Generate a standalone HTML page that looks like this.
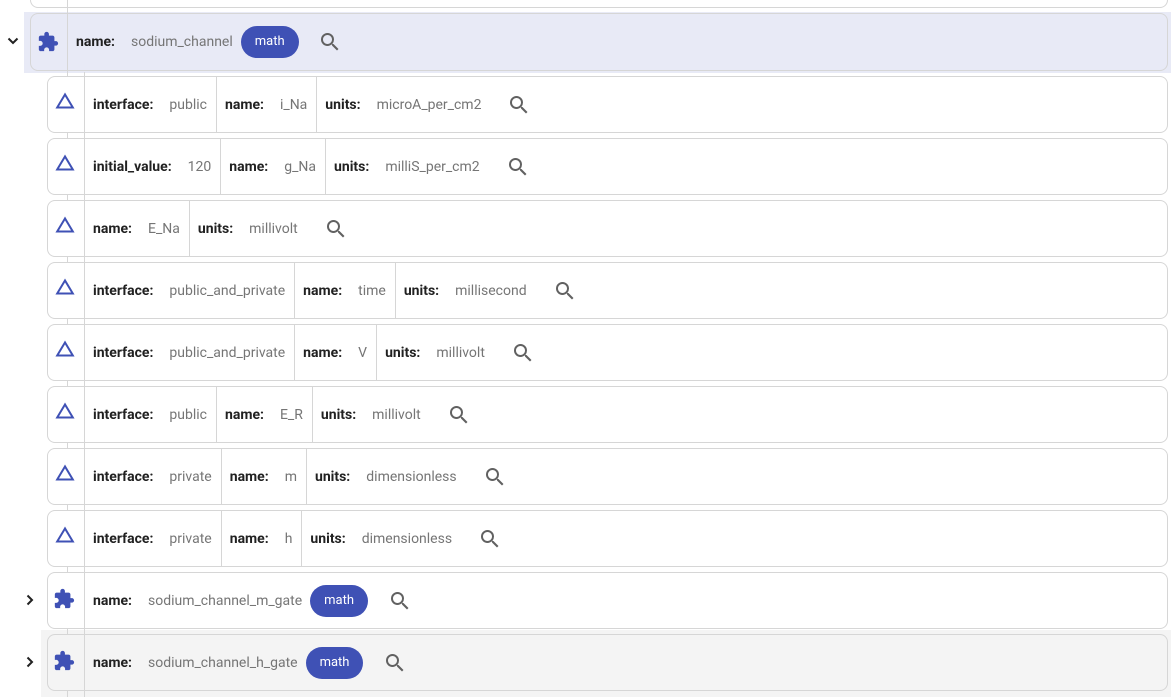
<!DOCTYPE html>
<html><head><meta charset="utf-8"><style>
body{margin:0;width:1171px;height:697px;overflow:hidden;background:#fff;font-family:Roboto,"Liberation Sans",sans-serif;font-size:14px;position:relative}
.band{position:absolute;background:#e8eaf6}
.card{position:absolute;border:1px solid #d6d6d6;border-radius:8px;box-sizing:border-box;display:flex;align-items:center;background:#fff}
.ic{width:36px;height:100%;display:flex;align-items:center;justify-content:center;flex:none}
.cell{display:flex;align-items:center;height:100%;padding:0 9px 0 8px;border-left:1px solid #d6d6d6;white-space:nowrap}
.cell.last{padding-right:0}
.l{font-weight:bold;color:#212121;font-size:14px}
.v{color:#757575;margin-left:16px}
.chip{background:#3f51b5;color:#fff;border-radius:16px;height:32px;line-height:32px;padding:0 14px;margin-left:8px;font-size:13px}
.s{margin-left:26px;display:flex}
.vl{position:absolute;width:1px;background:#d6d6d6}
.arr{position:absolute;font-size:13px;color:#222}
</style></head><body>
<div class="card" style="left:30px;top:-50px;width:1138px;height:58px"></div>
<div class="band" style="left:24px;top:12px;width:1147px;height:61px"></div>
<div class="band" style="left:41px;top:630px;width:1130px;height:67px;background:#f4f4f4"></div>
<svg class="arr" style="left:7px;top:37px" width="12" height="8" viewBox="0 0 12 8"><path d="M1.5 1.5L6 6l4.5-4.5" stroke="#222" stroke-width="2" fill="none"/></svg>
<svg class="arr" style="left:26px;top:594px" width="8" height="12" viewBox="0 0 8 12"><path d="M1.5 1.5L6 6l-4.5 4.5" stroke="#222" stroke-width="2" fill="none"/></svg>
<svg class="arr" style="left:26px;top:656px" width="8" height="12" viewBox="0 0 8 12"><path d="M1.5 1.5L6 6l-4.5 4.5" stroke="#222" stroke-width="2" fill="none"/></svg>
<div class="vl" style="left:67px;top:0;height:697px"></div>
<div class="vl" style="left:84px;top:72px;height:625px"></div>

<div class="card" style="left:30px;top:13px;width:1138px;height:58px;background:#e8eaf6">
<div class="ic" style="padding-right:3px;box-sizing:border-box"><svg width="22" height="22" viewBox="0 0 24 24"><path fill="#3f51b5" d="M20.5 11H19V7c0-1.1-.9-2-2-2h-4V3.5C13 2.12 11.88 1 10.5 1S8 2.12 8 3.5V5H4c-1.1 0-1.99.9-1.99 2v3.8H3.5c1.49 0 2.7 1.21 2.7 2.7s-1.21 2.7-2.7 2.7H2V20c0 1.1.9 2 2 2h3.8v-1.5c0-1.49 1.21-2.7 2.7-2.7s2.7 1.21 2.7 2.7V22H17c1.1 0 2-.9 2-2v-4h1.5c1.38 0 2.5-1.12 2.5-2.5S21.88 11 20.5 11z"/></svg></div>
<div class="cell last"><span class="l">name:</span><span class="v">sodium_channel</span><span class="chip">math</span></div>
<span class="s" style="margin-left:19px"><svg width="24" height="24" viewBox="0 0 24 24"><path fill="#616161" d="M15.5 14h-.79l-.28-.27A6.47 6.47 0 0016 9.5 6.5 6.5 0 109.5 16c1.61 0 3.09-.59 4.23-1.57l.27.28v.79l5 4.99L20.49 19l-4.99-5zm-6 0C7.01 14 5 11.99 5 9.5S7.01 5 9.5 5 14 7.01 14 9.5 11.99 14 9.5 14z"/></svg></span>
</div>
<div id="rows"></div>
<script>
const T='<svg width="20" height="18" viewBox="0 0 20 18" style="margin-top:-7px;margin-left:-3px"><path d="M10 2.5L2.2 15.5h15.6z" fill="none" stroke="#3f51b5" stroke-width="2"/></svg>';
const P='<svg width="22" height="22" viewBox="0 0 24 24" style="margin-left:-4px;margin-top:-3px"><path fill="#3f51b5" d="M20.5 11H19V7c0-1.1-.9-2-2-2h-4V3.5C13 2.12 11.88 1 10.5 1S8 2.12 8 3.5V5H4c-1.1 0-1.99.9-1.99 2v3.8H3.5c1.49 0 2.7 1.21 2.7 2.7s-1.21 2.7-2.7 2.7H2V20c0 1.1.9 2 2 2h3.8v-1.5c0-1.49 1.21-2.7 2.7-2.7s2.7 1.21 2.7 2.7V22H17c1.1 0 2-.9 2-2v-4h1.5c1.38 0 2.5-1.12 2.5-2.5S21.88 11 20.5 11z"/></svg>';
const S='<span class="s"><svg width="24" height="24" viewBox="0 0 24 24"><path fill="#616161" d="M15.5 14h-.79l-.28-.27A6.47 6.47 0 0016 9.5 6.5 6.5 0 109.5 16c1.61 0 3.09-.59 4.23-1.57l.27.28v.79l5 4.99L20.49 19l-4.99-5zm-6 0C7.01 14 5 11.99 5 9.5S7.01 5 9.5 5 14 7.01 14 9.5 11.99 14 9.5 14z"/></svg></span>';
const rows=[
[['interface','public'],['name','i_Na'],['units','microA_per_cm2']],
[['initial_value','120'],['name','g_Na'],['units','milliS_per_cm2']],
[['name','E_Na'],['units','millivolt']],
[['interface','public_and_private'],['name','time'],['units','millisecond']],
[['interface','public_and_private'],['name','V'],['units','millivolt']],
[['interface','public'],['name','E_R'],['units','millivolt']],
[['interface','private'],['name','m'],['units','dimensionless']],
[['interface','private'],['name','h'],['units','dimensionless']],
'sodium_channel_m_gate','sodium_channel_h_gate'];
let h='';
rows.forEach((r,k)=>{
 const top=76+62*k;
 const bg=k==9?'background:#f4f4f4;':'';
 h+=`<div class="card" style="left:47px;top:${top}px;width:1121px;height:57px;${bg}">`;
 if(typeof r=='string'){
  h+=`<div class="ic">${P}</div><div class="cell last"><span class="l">name:</span><span class="v">${r}</span><span class="chip">math</span></div>${S.replace('class="s"','class="s" style="margin-left:20px"')}`;
 }else{
  h+=`<div class="ic">${T}</div>`;
  r.forEach((c,i)=>{h+=`<div class="cell${i==r.length-1?' last':''}"><span class="l">${c[0]}:</span><span class="v">${c[1]}</span></div>`});
  h+=S;
 }
 h+='</div>';
});
document.getElementById('rows').outerHTML=h;
</script>
</body></html>
